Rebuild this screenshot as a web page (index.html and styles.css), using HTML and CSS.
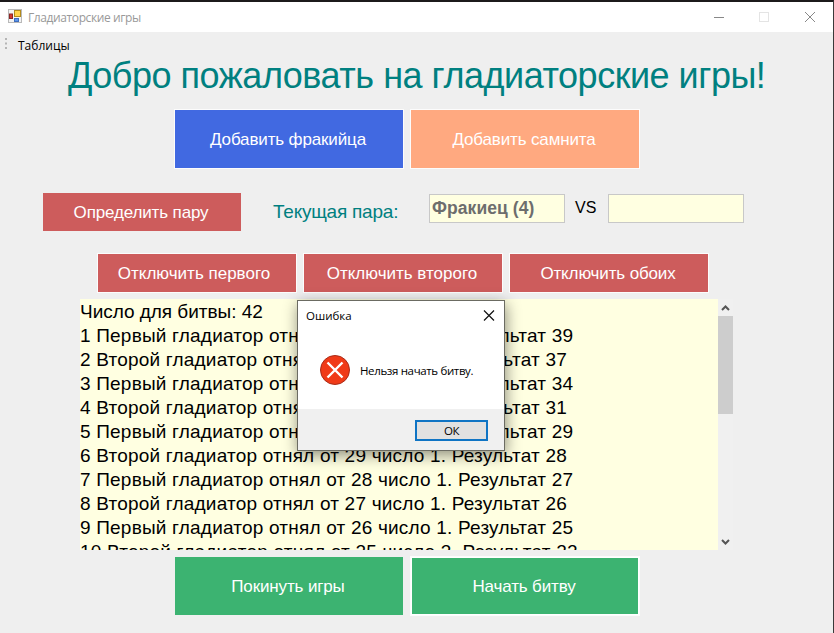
FILE: index.html
```html
<!DOCTYPE html>
<html lang="ru">
<head>
<meta charset="utf-8">
<title>Гладиаторские игры</title>
<link rel="stylesheet" href="styles.css">
</head>
<body>
<div class="window">
  <header class="titlebar">
    <svg class="app-icon" width="14" height="14" viewBox="0 0 14 14">
      <rect x=".5" y=".5" width="13" height="13" fill="#f2f2f2" stroke="#b9b9b9"/>
      <rect x="1.500" y="5" width="3" height="4.500" fill="#d5382f" stroke="#8b2626"/>
      <rect x="6.500" y="1.500" width="6" height="6" fill="#ffd34a" stroke="#b28a1c"/>
      <rect x="6.500" y="9.500" width="4" height="3" fill="#5b96ed" stroke="#3f6dbd"/>
    </svg>
    <span class="caption">Гладиаторские игры</span>
    <svg class="controls" width="104" height="12" viewBox="0 0 104 12" fill="none">
      <path d="M0 6.500h10" stroke="#888"/>
      <rect x="45.500" y="1.500" width="9" height="9" stroke="#e4e4e4"/>
      <path d="M91 1l10 10M101 1l-10 10" stroke="#888"/>
    </svg>
  </header>
  <nav class="menu">
    <svg width="3" height="12" viewBox="0 0 3 12" fill="#b5b5b5"><path d="M0 0h2v2H0zM0 4.500h2v2H0zM0 9h2v2H0z"/></svg>
    <span class="menu-item">Таблицы</span>
  </nav>
  <h1 class="heading"><span>Добро пожаловать на гладиаторские игры!</span></h1>
  <div class="row add-row">
    <button class="btn tall blue">Добавить фракийца</button>
    <button class="btn tall salmon">Добавить самнита</button>
  </div>
  <div class="pair-row">
    <button class="btn red flat">Определить пару</button>
    <span class="pair-label">Текущая пара:</span>
    <div class="field"><span>Фракиец (4)</span></div>
    <span class="vs">VS</span>
    <div class="field"></div>
  </div>
  <div class="row off-row">
    <button class="btn red loose first">Отключить первого</button>
    <button class="btn red loose">Отключить второго</button>
    <button class="btn red">Отключить обоих</button>
  </div>
  <div class="log">
    <div class="lines">
      <p class="total">Число для битвы: 42</p>
      <p>1 Первый гладиатор отнял от 42 число 3. Результат 39</p>
      <p>2 Второй гладиатор отнял от 39 число 2. Результат 37</p>
      <p>3 Первый гладиатор отнял от 37 число 3. Результат 34</p>
      <p>4 Второй гладиатор отнял от 34 число 3. Результат 31</p>
      <p>5 Первый гладиатор отнял от 31 число 2. Результат 29</p>
      <p>6 Второй гладиатор отнял от 29 число 1. Результат 28</p>
      <p>7 Первый гладиатор отнял от 28 число 1. Результат 27</p>
      <p>8 Второй гладиатор отнял от 27 число 1. Результат 26</p>
      <p>9 Первый гладиатор отнял от 26 число 1. Результат 25</p>
      <p>10 Второй гладиатор отнял от 25 число 3. Результат 22</p>
    </div>
    <div class="scrollbar">
      <svg class="arrow" width="15" height="17" viewBox="0 0 15 17"><path d="M4 11L7.500 7.500l3.500 3.500" fill="none" stroke="#555" stroke-width="2"/></svg>
      <div class="thumb"></div>
      <svg class="arrow down" width="15" height="17" viewBox="0 0 15 17"><path d="M4 7l3.500 3.500L11 7" fill="none" stroke="#555" stroke-width="2"/></svg>
    </div>
  </div>
  <div class="row end-row">
    <button class="btn tall green flat">Покинуть игры</button>
    <button class="btn tall green focused">Начать битву</button>
  </div>
</div>
<div class="dialog" role="alertdialog">
  <div class="dialog-head">
    <span class="dialog-title">Ошибка</span>
    <svg width="12" height="12" viewBox="0 0 12 12"><path d="M1 .5l10 10M11 .5L1 10.500" stroke="#111" stroke-width="1.200" fill="none"/></svg>
  </div>
  <div class="dialog-body">
    <svg width="32" height="32" viewBox="0 0 32 32">
      <circle cx="16" cy="16" r="14.500" fill="#f03a17" stroke="#a92c19"/>
      <path d="M8.500 8.500l15 15M23.500 8.500l-15 15" stroke="#fff" stroke-width="2.400" fill="none"/>
    </svg>
    <span class="message">Нельзя начать битву.</span>
  </div>
  <div class="dialog-foot"><button class="ok">ОК</button></div>
</div>
</body>
</html>
```
FILE: styles.css
```css
* { box-sizing: border-box; }

body {
  margin: 0;
  width: 834px;
  height: 633px;
  overflow: hidden;
  font-family: "Liberation Sans", Arial, sans-serif;
  color: #000;
}

span { white-space: nowrap; }

.window {
  height: 633px;
  background: #efefef;
  border-top: 2px solid #1c1a1b;
  border-right: 1px solid #3a3a3a;
  display: flex;
  flex-direction: column;
  overflow: hidden;
}

.titlebar {
  height: 30px;
  flex: none;
  background: #fff;
  display: flex;
  align-items: center;
  padding: 0 15px 0 8px;
}

.app-icon { margin-top: -2px; }

.caption {
  margin-left: 6px;
  flex: 1;
  font: 12px "Open Sans", sans-serif;
  color: #999;
  letter-spacing: -0.4px;
}

.menu {
  height: 26px;
  flex: none;
  display: flex;
  align-items: center;
  padding-left: 5px;
}

.menu svg { margin-top: -3px; }

.menu-item {
  margin-left: 10px;
  font: 12px "Open Sans", sans-serif;
}

.heading {
  margin: 0;
  height: 38px;
  flex: none;
  padding-left: 68px;
  font-size: 36px;
  line-height: 36px;
  font-weight: 400;
  letter-spacing: -0.48px;
  color: #008080;
}

.row { display: flex; flex: none; gap: 8px; }

.btn {
  border: 0;
  border-radius: 0;
  padding: 1px 2px 0 0;
  width: 198px;
  height: 38px;
  flex: none;
  font: 17px "Liberation Sans", Arial, sans-serif;
  letter-spacing: -0.14px;
  color: #fff;
  box-shadow: 0 0 0 1px #fcfcfc;
}

.loose { letter-spacing: 0; }
.first { padding-right: 6px; }
.tall { width: 228px; height: 58px; }
.flat { box-shadow: none; }
.blue { background: #4169e1; }
.salmon { background: #ffa980; }
.red { background: #cd5c5c; }
.green { background: #3cb371; }
.focused { border: 1px solid #fff; }

.add-row { margin: 14px 0 0 175px; }

.pair-row {
  height: 38px;
  flex: none;
  margin: 25px 0 0 43px;
  display: flex;
}

.pair-label {
  width: 156px;
  margin-left: 32px;
  font-size: 19px;
  line-height: 37px;
  letter-spacing: -0.23px;
  color: #008080;
}

.field {
  width: 136px;
  height: 29px;
  margin-top: 1px;
  padding-left: 2px;
  border: 1px solid #c8c8c8;
  background: #ffffe1;
  color: #6d6d6d;
  font-size: 17.500px;
  font-weight: 700;
  letter-spacing: 0.08px;
  line-height: 26px;
}

.vs { width: 43px; padding-left: 10px; font-size: 16px; line-height: 30px; }

.off-row { margin: 23px 0 0 98px; }

.log {
  width: 653px;
  height: 251px;
  flex: none;
  margin: 7px 0 0 80px;
  display: flex;
}

.lines {
  width: 638px;
  padding: 1px 0 0;
  overflow: hidden;
  background: #ffffe1;
  font-size: 19px;
  letter-spacing: 0.2px;
  line-height: 24px;
}

.lines p { margin: 0; white-space: nowrap; }
.lines .total { letter-spacing: -0.03px; }

.scrollbar { width: 15px; display: flex; flex-direction: column; background: #f0f0f0; }
.thumb { height: 98px; background: #cdcdcd; }
.arrow { flex: none; }
.down { margin-top: auto; }

.end-row { margin: 7px 0 0 175px; }

.dialog {
  position: absolute;
  left: 297px;
  top: 300px;
  width: 208px;
  height: 151px;
  border: 1px solid #6b6b62;
  background: #fff;
  box-shadow: 1px 4px 14px rgba(0, 0, 0, 0.45);
  display: flex;
  flex-direction: column;
  font: 11.500px "Open Sans", sans-serif;
}

.dialog-head {
  height: 29px;
  padding: 0 9px 0 8px;
  display: flex;
  align-items: center;
  justify-content: space-between;
}

.dialog-body {
  height: 79px;
  display: flex;
  align-items: center;
  padding: 1px 0 0 21px;
}

.message { margin-left: 9px; letter-spacing: -0.36px; }

.dialog-foot {
  flex: 1;
  background: #f0f0f0;
  display: flex;
  justify-content: flex-end;
  padding: 11px 16px 0 0;
}

.ok {
  width: 73px;
  height: 21px;
  padding: 0;
  border: 2px solid #0f74c4;
  background: #e1e1e1;
  font: 11.500px/16px "Open Sans", sans-serif;
  letter-spacing: -0.4px;
}
```
